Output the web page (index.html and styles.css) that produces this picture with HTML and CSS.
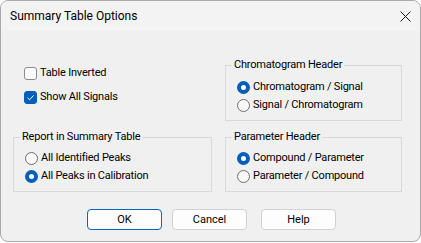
FILE: index.html
```html
<!DOCTYPE html>
<html lang="en">
<head>
    <meta charset="UTF-8">
    <title>Summary Table Options</title>
    <link rel="stylesheet" href="styles.css">
</head>
<body>
    <div class="dialog">
        <div class="titlebar">
            <span class="title">Summary Table Options</span>
            <svg class="close" width="11" height="11" viewBox="0 0 11 11">
                <path d="M0.5 0.5 L10.5 10.5 M10.5 0.5 L0.5 10.5" stroke="#1a1a1a" stroke-width="1" fill="none"/>
            </svg>
        </div>

        <div class="content">
            <div class="grid">
                <!-- left top: plain checkboxes -->
                <div class="checks">
                    <div class="row"><span class="check"></span>Table Inverted</div>
                    <div class="row">
                        <span class="check on">
                            <svg width="13" height="13" viewBox="0 0 13 13"><path d="M3.5 6.8 L5.6 8.8 L9.6 4.4" stroke="#fff" stroke-width="1" fill="none"/></svg>
                        </span>Show All Signals
                    </div>
                </div>

                <fieldset class="group group-chrom">
                    <legend>Chromatogram Header</legend>
                    <div class="row"><span class="radio on"></span>Chromatogram / Signal</div>
                    <div class="row"><span class="radio"></span>Signal / Chromatogram</div>
                </fieldset>

                <fieldset class="group group-low">
                    <legend>Report in Summary Table</legend>
                    <div class="row"><span class="radio"></span>All Identified Peaks</div>
                    <div class="row"><span class="radio on"></span>All Peaks in Calibration</div>
                </fieldset>

                <fieldset class="group group-low">
                    <legend>Parameter Header</legend>
                    <div class="row"><span class="radio on"></span>Compound / Parameter</div>
                    <div class="row"><span class="radio"></span>Parameter / Compound</div>
                </fieldset>
            </div>

            <div class="buttons">
                <button class="btn btn-default">OK</button>
                <button class="btn">Cancel</button>
                <button class="btn btn-help">Help</button>
            </div>
        </div>
    </div>
</body>
</html>
```

FILE: styles.css
```css
* {
    box-sizing: border-box;
}

body {
    margin: 0;
    background-color: #fff;
    font-family: Roboto, "Liberation Sans", sans-serif;
    font-size: 11px;
    color: #000;
}

.dialog {
    width: 421px;
    height: 242px;
    border: 1px solid #a9a9a9;
    border-radius: 8px;
    overflow: hidden;
    background-color: #f0f0f0;
}

.titlebar {
    height: 30px;
    background-color: #f3f3f3;
    display: flex;
    align-items: center;
    justify-content: space-between;
    padding: 0 9px 0 9px;
}

.title {
    font-size: 12px;
    line-height: 16px;
}

.content {
    padding: 26px 0 0 12px;
}

.grid {
    display: grid;
    grid-template-columns: 199px 177px;
    grid-template-rows: 72px auto;
    column-gap: 13px;
}

.row {
    display: flex;
    align-items: center;
    height: 18px;
    line-height: 18px;
    white-space: nowrap;
    letter-spacing: -0.2px;
}

.checks {
    padding: 7px 0 0 11px;
}

.checks .row + .row {
    margin-top: 6px;
}

/* checkbox */
.check {
    width: 13px;
    height: 13px;
    border: 1px solid #8a8a8a;
    border-radius: 3px;
    background-color: #fbfbfb;
    margin-right: 3px;
    flex: none;
}

.check.on {
    background-color: #005fb8;
    border-color: #005fb8;
}

.check svg {
    display: block;
    margin: -1px;
}

/* radio */
.radio {
    width: 13px;
    height: 13px;
    border: 1px solid #6e6e6e;
    border-radius: 50%;
    background-color: #f8f8f8;
    margin-right: 3px;
    flex: none;
}

.radio.on {
    border: 4px solid #005fb8;
    background-color: #fff;
}

/* group boxes */
.group {
    margin: 0;
    border: 1px solid #d9d9d9;
    padding: 5px 0 0 11px;
    min-width: 0;
}

.group legend {
    padding: 0 2px;
    margin-left: -5px;
    line-height: 16px;
    letter-spacing: -0.2px;
}

.group-chrom {
    height: 64px;
}

.group-low {
    height: 63px;
    padding-top: 4px;
}

/* buttons */
.buttons {
    display: flex;
    gap: 10px;
    padding-left: 74px;
    margin-top: 17px;
}

.btn {
    width: 75px;
    height: 21px;
    padding: 0;
    border: 1px solid #d0d0d0;
    border-radius: 4px;
    background-color: #fdfdfd;
    font-family: inherit;
    font-size: 11px;
    color: #000;
}

.btn-default {
    border-color: #0067c0;
}

.btn-help {
    margin-left: 4px;
}
```
